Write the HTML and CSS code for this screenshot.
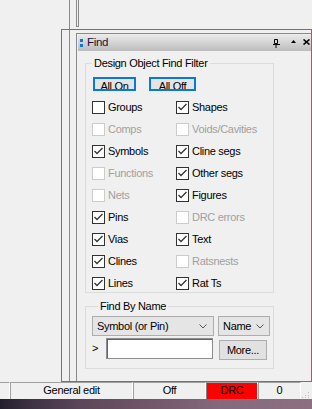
FILE: index.html
```html
<!DOCTYPE html>
<html>
<head>
<meta charset="utf-8">
<link rel="stylesheet" href="styles.css">
</head>
<body>
<div class="desk">
  <div class="gutter"></div>
  <div class="column">
    <div class="stub"></div>
    <div class="panel">
      <div class="titlebar">
        <span class="grip"><i></i><i></i></span>
        <span class="title">Find</span>
        <span class="tb-icons">
          <svg class="ic-pin" width="7" height="9" viewBox="0 0 7 9"><path d="M1.5 0.5h3v4h-3z" fill="none" stroke="#000"/><path d="M0 5.5h7M3 5.5v3.5" stroke="#000"/></svg>
          <svg class="ic-up" width="5" height="3" viewBox="0 0 5 3"><path d="M0 3L2.5 0L5 3z" fill="#000"/></svg>
          <svg class="ic-x" width="7" height="6" viewBox="0 0 7 6"><path d="M0.5 0.5L6.5 5.5M6.5 0.5L0.5 5.5" stroke="#000" stroke-width="1.6"/></svg>
        </span>
      </div>
      <div class="content">
        <fieldset class="group filter">
          <legend>Design Object Find Filter</legend>
          <div class="btnrow">
            <button class="tbtn w1">All On</button>
            <button class="tbtn w2">All Off</button>
          </div>
          <div class="checks">
            <label class="chk"><span class="box"></span>Groups</label>
            <label class="chk on"><span class="box"><svg viewBox="0 0 11 11"><polyline points="1.5,5 4,7.5 9.5,2"/></svg></span>Shapes</label>
            <label class="chk off"><span class="box"></span>Comps</label>
            <label class="chk off"><span class="box"></span>Voids/Cavities</label>
            <label class="chk on"><span class="box"><svg viewBox="0 0 11 11"><polyline points="1.5,5 4,7.5 9.5,2"/></svg></span>Symbols</label>
            <label class="chk on"><span class="box"><svg viewBox="0 0 11 11"><polyline points="1.5,5 4,7.5 9.5,2"/></svg></span>Cline segs</label>
            <label class="chk off"><span class="box"></span>Functions</label>
            <label class="chk on"><span class="box"><svg viewBox="0 0 11 11"><polyline points="1.5,5 4,7.5 9.5,2"/></svg></span>Other segs</label>
            <label class="chk off"><span class="box"></span>Nets</label>
            <label class="chk on"><span class="box"><svg viewBox="0 0 11 11"><polyline points="1.5,5 4,7.5 9.5,2"/></svg></span>Figures</label>
            <label class="chk on"><span class="box"><svg viewBox="0 0 11 11"><polyline points="1.5,5 4,7.5 9.5,2"/></svg></span>Pins</label>
            <label class="chk off"><span class="box"></span>DRC errors</label>
            <label class="chk on"><span class="box"><svg viewBox="0 0 11 11"><polyline points="1.5,5 4,7.5 9.5,2"/></svg></span>Vias</label>
            <label class="chk on"><span class="box"><svg viewBox="0 0 11 11"><polyline points="1.5,5 4,7.5 9.5,2"/></svg></span>Text</label>
            <label class="chk on"><span class="box"><svg viewBox="0 0 11 11"><polyline points="1.5,5 4,7.5 9.5,2"/></svg></span>Clines</label>
            <label class="chk off"><span class="box"></span>Ratsnests</label>
            <label class="chk on"><span class="box"><svg viewBox="0 0 11 11"><polyline points="1.5,5 4,7.5 9.5,2"/></svg></span>Lines</label>
            <label class="chk on"><span class="box"><svg viewBox="0 0 11 11"><polyline points="1.5,5 4,7.5 9.5,2"/></svg></span>Rat Ts</label>
          </div>
        </fieldset>
        <fieldset class="group byname">
          <legend>Find By Name</legend>
          <div class="row1">
            <div class="combo wide"><span>Symbol (or Pin)</span><svg width="8" height="5" viewBox="0 0 8 5"><path d="M0.5 0.5L4 4L7.5 0.5" fill="none" stroke="#555"/></svg></div>
            <div class="combo narrow"><span>Name</span><svg width="8" height="5" viewBox="0 0 8 5"><path d="M0.5 0.5L4 4L7.5 0.5" fill="none" stroke="#555"/></svg></div>
          </div>
          <div class="row2">
            <span class="prompt">&gt;</span>
            <div class="field"></div>
            <button class="more">More...</button>
          </div>
        </fieldset>
      </div>
    </div>
  </div>
  <div class="highlight"></div>
</div>
<div class="statusbar">
  <div class="cell c0"></div>
  <div class="cell c1">General edit</div>
  <div class="cell c2">Off</div>
  <div class="cell c3">DRC</div>
  <div class="cell c4">0</div>
  <div class="sgrip"><svg width="8" height="6" viewBox="0 0 8 6"><rect x="6" y="0" width="1" height="1" fill="#bbb"/><rect x="3" y="3" width="1" height="1" fill="#bbb"/><rect x="6" y="3" width="1" height="1" fill="#bbb"/><rect x="0" y="5" width="1" height="1" fill="#bbb"/><rect x="3" y="5" width="1" height="1" fill="#bbb"/><rect x="6" y="5" width="1" height="1" fill="#bbb"/></svg></div>
</div>
<div class="wallpaper"></div>
</body>
</html>
```

FILE: styles.css
```css
* { box-sizing: border-box; }
html, body { margin: 0; padding: 0; }
body {
  width: 312px;
  height: 409px;
  overflow: hidden;
  background: #f0f0f0;
  font-family: "Liberation Sans", Arial, sans-serif;
  font-size: 11px;
  letter-spacing: -0.3px;
  color: #000;
}
.desk {
  position: relative;
  height: 382px;
  display: flex;
}
.gutter { width: 69px; flex: none; }
.column {
  flex: 1;
  border-left: 1px solid #8a8a8a;
  padding-left: 6px;
  display: flex;
  flex-direction: column;
}
.stub {
  width: 3px;
  height: 27px;
  border: 1px solid #8a8a8a;
  border-top: 0;
  flex: none;
}
.panel {
  margin-top: 6px;
  flex: 1;
  border-top: 1px solid #8a8a8a;
  border-left: 1px solid #8a8a8a;
  padding-left: 1px;
  display: flex;
  flex-direction: column;
}
.titlebar {
  height: 17px;
  flex: none;
  background: linear-gradient(#ececec, #bcbcbc);
  display: flex;
  align-items: center;
  padding-left: 2px;
}
.grip {
  display: flex;
  flex-direction: column;
  gap: 2px;
  width: 3px;
  margin-top: 1px;
}
.grip i {
  display: block;
  width: 3px;
  height: 3px;
  background: #0a78d7;
}
.title {
  margin-left: 4px;
  color: #14143c;
  font-size: 11.5px;
  line-height: 17px;
}
.tb-icons {
  margin-left: auto;
  display: flex;
  align-items: center;
  padding-right: 2px;
}
.ic-pin { margin-right: 11px; margin-top: 2px; }
.ic-up { margin-right: 7px; margin-top: -2px; }
.ic-x { margin-top: -1px; }

.content {
  padding: 6px 0 0 7px;
}
.group {
  margin: 0;
  width: 189px;
  border: 1px solid #dcdcdc;
  padding: 0;
  min-width: 0;
}
.group legend {
  margin-left: 6px;
  padding: 0 2px;
  line-height: 13px;
}
.filter { padding: 7px 0 2px 0; }
.btnrow {
  display: flex;
  gap: 13px;
  padding-left: 7px;
}
.tbtn {
  height: 14px;
  border: 2px solid #0a78d7;
  background: #e4e4e4;
  font: inherit;
  letter-spacing: inherit;
  color: #000;
  padding: 1px 0 0 0;
  line-height: 13px;
  display: flex;
  justify-content: center;
  align-items: flex-start;
  overflow: hidden;
}
.w1 { width: 43px; }
.w2 { width: 47px; }
.checks {
  margin-top: 10px;
  padding-left: 6px;
  display: grid;
  grid-template-columns: 84px 1fr;
  grid-auto-rows: 13px;
  row-gap: 9px;
}
.chk {
  display: flex;
  align-items: center;
  gap: 3px;
  white-space: nowrap;
  line-height: 13px;
}
.box {
  width: 13px;
  height: 13px;
  border: 1px solid #333;
  background: #fff;
  flex: none;
  display: block;
}
.box svg {
  display: block;
  width: 11px;
  height: 11px;
  fill: none;
  stroke: #333;
  stroke-width: 1.3;
}
.chk.off { color: #a0a0a0; }
.chk.off .box { border-color: #cccccc; }

.byname {
  margin-top: 7px;
  padding: 3px 0 8px 6px;
}
.row1 {
  display: flex;
  gap: 4px;
}
.combo {
  height: 20px;
  border: 1px solid #adadad;
  background: #e5e5e5;
  display: flex;
  align-items: center;
  justify-content: space-between;
  padding: 0 6px 0 4px;
}
.combo svg { display: block; }
.wide { width: 122px; }
.narrow { width: 52px; padding-right: 5px; }
.row2 {
  display: flex;
  align-items: flex-start;
  margin-top: 2px;
}
.prompt {
  width: 14px;
  line-height: 21px;
  flex: none;
}
.field {
  width: 107px;
  height: 21px;
  border: 1px solid #8c8c8c;
  box-shadow: inset 1px 1px 0 #646464;
  background: #fff;
}
.more {
  margin: 2px 0 0 6px;
  width: 48px;
  height: 20px;
  border: 1px solid #adadad;
  background: #e1e1e1;
  font: inherit;
  letter-spacing: inherit;
  color: #000;
  padding: 0;
}
.highlight {
  position: absolute;
  left: 61px;
  top: 29px;
  width: 251px;
  height: 353px;
  border: 1px solid #e04444;
  pointer-events: none;
}
.statusbar {
  height: 17px;
  display: flex;
  background: #f0f0f0;
}
.cell {
  height: 17px;
  border-top: 1px solid #a0a0a0;
  border-left: 1px solid #a0a0a0;
  border-right: 1px solid #fff;
  text-align: center;
  line-height: 15px;
  white-space: nowrap;
}
.c0 { width: 10px; border-left: 0; }
.c1 { width: 123px; }
.c2 { width: 73px; }
.c3 { width: 52px; background: #ff0000; border-left-color: #808080; }
.c4 { width: 43px; }
.sgrip {
  flex: 1;
  display: flex;
  align-items: flex-end;
  justify-content: flex-end;
  padding: 0 2px 1px 0;
}
.sgrip svg { display: block; }
.wallpaper {
  height: 10px;
  background: linear-gradient(90deg, #241e2c 0%, #3e3242 10%, #5a4658 25%, #6e5466 45%, #84687c 70%, #8c7082 100%);
}
```
